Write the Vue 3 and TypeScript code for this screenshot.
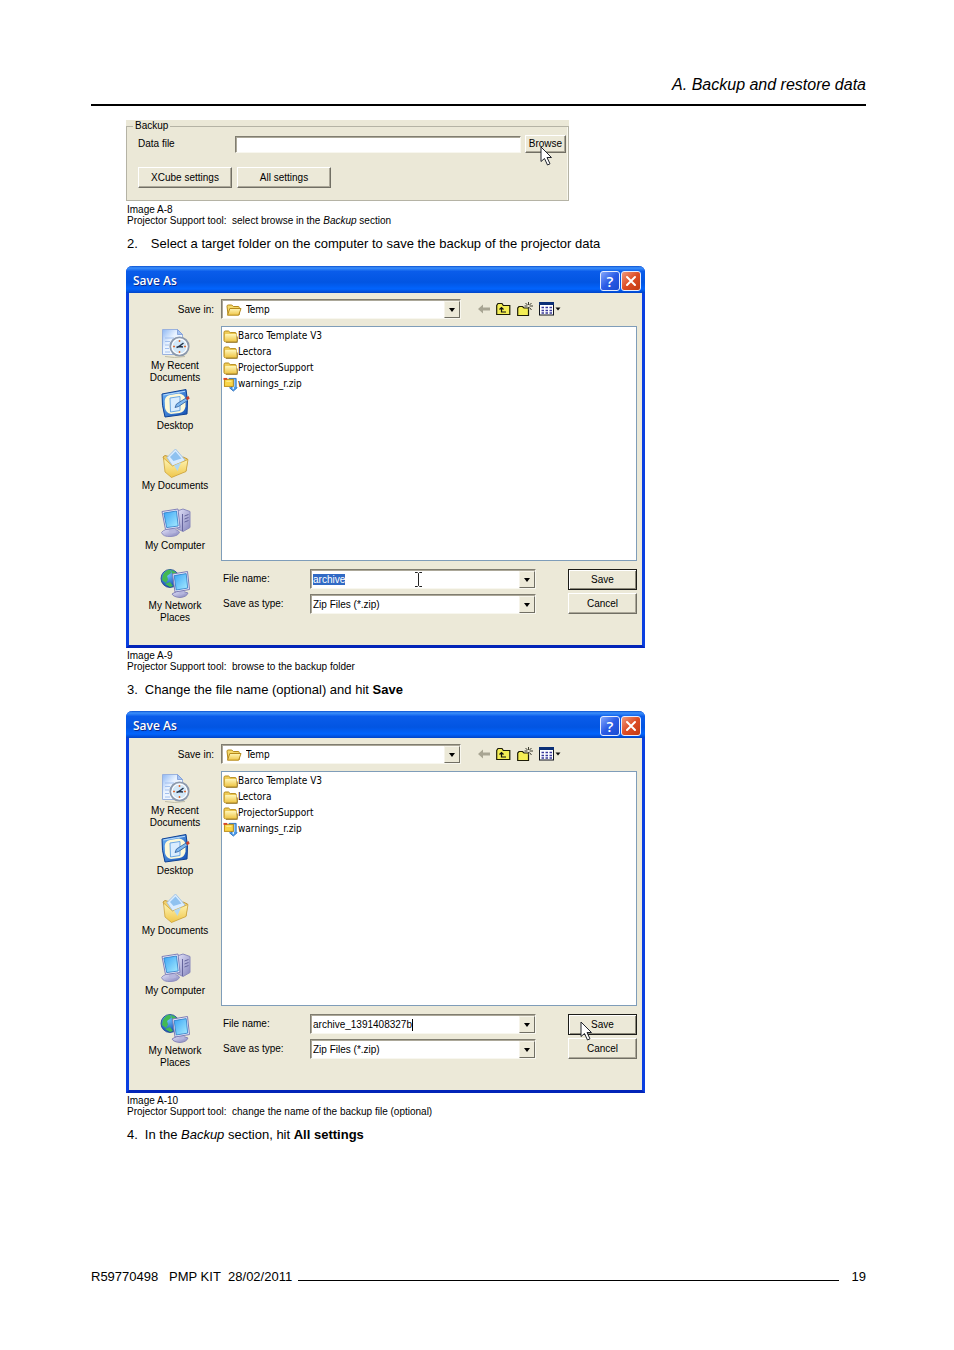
<script setup lang="ts">
import { onMounted, ref } from 'vue'

interface SaveDialog {
  id: string
  fileName: string
  selected: boolean
  image: string
  caption: string
}

const dialogs: SaveDialog[] = [
  {
    id: 'first',
    fileName: 'archive',
    selected: true,
    image: 'Image A-9',
    caption: 'Projector Support tool:  browse to the backup folder',
  },
  {
    id: 'second',
    fileName: 'archive_1391408327b',
    selected: false,
    image: 'Image A-10',
    caption: 'Projector Support tool:  change the name of the backup file (optional)',
  },
]

const places = [
  { icon: 'i-recent', label: 'My Recent Documents' },
  { icon: 'i-desktop', label: 'Desktop' },
  { icon: 'i-documents', label: 'My Documents' },
  { icon: 'i-computer', label: 'My Computer' },
  { icon: 'i-network', label: 'My Network Places' },
]

const files = [
  { icon: 'i-folder', name: 'Barco Template V3' },
  { icon: 'i-folder', name: 'Lectora' },
  { icon: 'i-folder', name: 'ProjectorSupport' },
  { icon: 'i-zip', name: 'warnings_r.zip' },
]

const root = ref<HTMLElement | null>(null)

onMounted(() => {
  const field = root.value?.querySelector<HTMLInputElement>('#name-first')
  field?.focus({ preventScroll: true })
  field?.select()
})
</script>

<template>
  <div ref="root" class="page">
    <svg class="defs" width="0" height="0" aria-hidden="true">
      <defs>
        <linearGradient id="g-fold" x1="0" y1="0" x2="0" y2="1">
          <stop offset="0" stop-color="#fff6b8" />
          <stop offset="1" stop-color="#efc64a" />
        </linearGradient>
        <linearGradient id="g-paper" x1="0" y1="0" x2="1" y2="1">
          <stop offset="0" stop-color="#8fb8f4" />
          <stop offset="0.4" stop-color="#e8f2ff" />
          <stop offset="1" stop-color="#ffffff" />
        </linearGradient>
        <linearGradient id="g-screen" x1="0" y1="0" x2="1" y2="1">
          <stop offset="0" stop-color="#3aa4f5" />
          <stop offset="1" stop-color="#a8ecff" />
        </linearGradient>
        <linearGradient id="g-case" x1="0" y1="0" x2="1" y2="1">
          <stop offset="0" stop-color="#e4e4fa" />
          <stop offset="1" stop-color="#8484bd" />
        </linearGradient>
        <linearGradient id="g-blue" x1="0" y1="0" x2="1" y2="1">
          <stop offset="0" stop-color="#6db4f6" />
          <stop offset="1" stop-color="#1450b4" />
        </linearGradient>
        <radialGradient id="g-globe" cx="0.4" cy="0.3" r="0.8">
          <stop offset="0" stop-color="#6cc0ff" />
          <stop offset="1" stop-color="#0a38a0" />
        </radialGradient>
      </defs>
      <symbol id="i-folder" viewBox="0 0 15 14">
        <path d="M1 3q0-1.500 1.300-1.500h3.200l1.700 1.600h5q1 0 1 1v1.200l.9 5.900q0 1-1 1.100H2.400Q1.200 12.300 1 11z" fill="#f0cd58" stroke="#b58a1c" />
        <path d="M2 5.300q.1-.7.8-.7h9.700q.7 0 .8.700l.5 5.400q0 1-.8 1H3q-.8 0-.8-.8z" fill="url(#g-fold)" />
        <path d="M3 12.900h11.300V7" fill="none" stroke="#8a6a1a" stroke-width=".8" />
      </symbol>
      <symbol id="i-open" viewBox="0 0 16 14">
        <path d="M1 3.200q0-1.200 1.200-1.200h3.600l1.500 1.500h5q1 0 1 1v7H2z" fill="#f5d96a" stroke="#b58a1c" />
        <path d="M3.800 5.500h11.200l-2.300 6.700H1.500z" fill="url(#g-fold)" stroke="#b58a1c" />
      </symbol>
      <symbol id="i-zip" viewBox="0 0 15 16">
        <path d="M6 1.500h7.500v8.500l1 1.500-4 3.500-4-3.500h2V9.500z" fill="#4a9bea" stroke="#2f72c0" />
        <path d="M12 2.500v8" stroke="#b5dcff" />
        <path d="M10.500 10v3" stroke="#d8efff" stroke-width="1.500" />
        <rect x="1" y="2.500" width="9.500" height="7.500" fill="#f9d548" stroke="#b98a14" />
        <path d="M0 2h4" stroke="#d8482a" stroke-width="2" />
        <path d="M3 4.500h5.500" stroke="#fff3a5" />
      </symbol>
      <symbol id="i-recent" viewBox="0 0 31 31">
        <path d="M2.500 1.500h15l5 5v20h-20z" fill="url(#g-paper)" stroke="#9ab2de" />
        <path d="M17.500 1.500l5 5h-5z" fill="#a5c4f4" stroke="#7b9bd6" stroke-width=".8" />
        <path d="M5 10h9M5 13.500h5M5 17h4M5 20.500h4M5 24h5" stroke="#a3c0ee" />
        <path d="M5 28.500q9 2 20 0" fill="none" stroke="#c0bda8" />
        <circle cx="19.500" cy="18.500" r="9.200" fill="#edf4fb" stroke="#8c99ac" stroke-width="1.800" />
        <circle cx="19.500" cy="18.500" r="7.400" fill="#d3e8f8" stroke="#fff" />
        <path d="M19.500 12v2M19.500 23v2M13 18.500h2M24 18.500h2" stroke="#df6b33" stroke-width="1.500" />
        <path d="M23.500 15L19 18.500l4 .5M19 18.500l-2.500 1" fill="none" stroke="#24344a" stroke-width="1.500" />
      </symbol>
      <symbol id="i-desktop" viewBox="0 0 31 31">
        <path d="M2 6L26 1.500Q28.500 12 27 26L5 29Q1.500 17 2 6z" fill="url(#g-blue)" stroke="#0f4294" />
        <path d="M3.500 7L25 3.300" stroke="#b8dcff" />
        <path d="M10 7l9-1.500q6 1 6.500 6v7q-1 5.500-6 6.500l-8.500 1q-5-1-6-6l-.3-7q.3-5 5.300-6z" fill="#fdf9d8" />
        <path d="M10 10l10-1.500v14L10.500 24z" fill="#d9edff" stroke="#6aa7e4" />
        <path d="M15 19.500l1.500-3.500 9.500-6 1.500 2.500-9 6z" fill="#7fb9f0" stroke="#2c5d9c" stroke-width=".8" />
        <path d="M26 9.500l2.500-1.500 1.200 2.500-2.500 1.700z" fill="#c8402c" />
      </symbol>
      <symbol id="i-documents" viewBox="0 0 31 31">
        <path d="M3 9l2-1.500 5 1.500 3 3 10-3 4.500 2-1.500 12-15 6z" fill="#f3d06c" stroke="#c29a3c" />
        <path d="M7 9.500L15.500 1l9.500 11-8.500 12z" fill="#d9ecff" stroke="#a2c4e6" />
        <path d="M15.500 3.500l6 7-8 2.500-3.500-4z" fill="#8fc2f0" />
        <path d="M3.500 10l9 8 15.500-6.500-2 12L11.500 29.500 5 24z" fill="url(#g-fold)" stroke="#cda43f" stroke-width=".8" />
        <path d="M14 17.500l7-3-3.500 8.500z" fill="#b0d8f4" />
      </symbol>
      <symbol id="i-computer" viewBox="0 0 31 31">
        <path d="M17 3l6-2 7 2.500v16l-7 4-6-3z" fill="url(#g-case)" stroke="#8a8abc" />
        <path d="M22.500 6v17M24.500 8l4-1.500M24.500 11l4-1.500M24.500 14l4-1.500" stroke="#65659d" fill="none" />
        <path d="M1.500 24.500q3-4 10-3.500 7 .5 8 3-1 4-8.500 4.500-8 .5-9.500-4z" fill="url(#g-case)" stroke="#9090c0" />
        <path d="M9 20h6l1 4.500-4 1-3-1.500z" fill="#b6b6dd" />
        <path d="M2 3.500L18 1l2 18.500L5.500 21.500z" fill="#ececfc" stroke="#8080b8" />
        <path d="M3.800 5l12.700-2 1.700 15-11.500 1.600z" fill="url(#g-screen)" stroke="#2a78c4" stroke-width=".8" />
      </symbol>
      <symbol id="i-network" viewBox="0 0 31 31">
        <circle cx="10" cy="10.500" r="9" fill="url(#g-globe)" stroke="#123e91" stroke-width=".8" />
        <path d="M3 7q2.500-5 7-5.500l1 3.500-4 3 1 3.500-2 3.500-4-3zM11 1.800l5 2.500-1 2.500-3-1zM5 16l5-2 3 4-3 1z" fill="#43b952" />
        <path d="M12 26q4-3.500 10-3l6 2q-1.500 4-8 4.500-6.500-.5-8-3.500z" fill="url(#g-case)" stroke="#8686b8" />
        <path d="M18 22l6-.5.5 4-4 1.500z" fill="#b6b6dd" />
        <path d="M12.500 6L27.500 3.500l2 18L15 24z" fill="#ececfc" stroke="#7c7cb4" />
        <path d="M14.200 7.600l12-2 1.500 14.500-11.500 1.900z" fill="url(#g-screen)" stroke="#2a78c4" stroke-width=".8" />
      </symbol>
      <symbol id="i-arrow" viewBox="0 0 12 20">
        <path d="M1 1v14.500l3.500-3 3 6.500 2.500-1.200-3-6.300h4.500z" fill="#fff" stroke="#20242e" stroke-linejoin="round" />
      </symbol>
    </svg>

    <header class="page-head">A. Backup and restore data</header>

    <main class="content">
      <figure class="figure panel-figure">
        <div class="panel">
          <fieldset class="backup">
            <legend>Backup</legend>
            <div class="data-row">
              <label for="data-file">Data file</label>
              <input id="data-file" class="data-input" type="text" />
              <div class="anchor">
                <button type="button" class="btn browse">Browse</button>
                <svg class="cursor on-browse" aria-hidden="true"><use href="#i-arrow" /></svg>
              </div>
            </div>
            <div class="settings-row">
              <button type="button" class="btn">XCube settings</button>
              <button type="button" class="btn">All settings</button>
            </div>
          </fieldset>
        </div>
        <figcaption>
          Image A-8<br />Projector Support tool:&nbsp; select browse in the <em>Backup</em> section
        </figcaption>
      </figure>

      <p class="step wide"><span>2.</span><span>Select a target folder on the computer to save the backup of the projector data</span></p>

      <template v-for="d in dialogs" :key="d.id">
        <figure class="figure">
          <section class="dialog">
            <div class="title-bar">
              <h2>Save As</h2>
              <button type="button" class="cap help" aria-label="Help">?</button>
              <button type="button" class="cap close" aria-label="Close">
                <svg viewBox="0 0 12 12" width="12" height="12"><path d="M2 2l8 8M10 2l-8 8" stroke="#fff" stroke-width="2" stroke-linecap="round" /></svg>
              </button>
            </div>
            <div class="dialog-body">
              <div class="look-row">
                <label class="look-label" :for="'in-' + d.id">Save in:</label>
                <div class="combo look-combo">
                  <svg class="open-icon" aria-hidden="true"><use href="#i-open" /></svg>
                  <select :id="'in-' + d.id" class="list-text"><option>Temp</option></select>
                  <span class="drop" aria-hidden="true"></span>
                </div>
                <div class="tools">
                  <button type="button" aria-label="Back">
                    <svg viewBox="0 0 12 10" width="12" height="10"><path d="M0 5l5-4.500V3.500h7v3H5v3z" fill="#a8a593" /></svg>
                  </button>
                  <button type="button" aria-label="Up one level">
                    <svg viewBox="0 0 15 14" width="15" height="14">
                      <path d="M.7 12.500V3.500L2 1.500h4l1.300 2h6.500v9z" fill="#f4ee55" stroke="#1c1c08" stroke-width="1.200" />
                      <path d="M5.500 6v4H10M3.500 7.500l2-2 2 2" fill="none" stroke="#111" stroke-width="1.200" />
                    </svg>
                  </button>
                  <button type="button" aria-label="New folder">
                    <svg viewBox="0 0 16 15" width="16" height="15">
                      <path d="M.7 13.500V6L2 4.500h3.500L7 6h4.500v7.500z" fill="#f4ee55" stroke="#1c1c08" stroke-width="1.200" />
                      <path d="M11.500 0v3M11.500 5v3M7.500 4h3M12.500 4H16M8.500 1l2 2M14.500 1l-2 2M14.500 8l-2-2.500" stroke="#3c3c30" />
                    </svg>
                  </button>
                  <button type="button" aria-label="View menu">
                    <svg viewBox="0 0 22 14" width="22" height="14">
                      <rect x=".5" y=".5" width="14" height="12.500" fill="#fff" stroke="#10151f" />
                      <path d="M0 1.500h15" stroke="#0b2f76" stroke-width="3" />
                      <path d="M2.500 5.500h2.500M6.500 5.500H9M10.500 5.500H13M2.500 8.500h2.500M6.500 8.500H9M10.500 8.500H13M2.500 11h2.500M6.500 11H9M10.500 11H13" stroke="#39399a" stroke-width="1.400" />
                      <path d="M16.500 5.500h5L19 8.500z" fill="#111" />
                    </svg>
                  </button>
                </div>
              </div>
              <div class="main-row">
                <nav class="places">
                  <button v-for="p in places" :key="p.icon" type="button">
                    <svg aria-hidden="true"><use :href="'#' + p.icon" /></svg>
                    <span>{{ p.label }}</span>
                  </button>
                </nav>
                <div class="work">
                  <ul class="files list-text">
                    <li v-for="f in files" :key="f.name">
                      <svg aria-hidden="true"><use :href="'#' + f.icon" /></svg>{{ f.name }}
                    </li>
                  </ul>
                  <div class="form-row">
                    <div class="fields">
                      <label :for="'name-' + d.id">File name:</label>
                      <div class="combo">
                        <input :id="'name-' + d.id" type="text" :value="d.fileName" />
                        <button type="button" class="drop" aria-label="Recent names"></button>
                        <svg v-if="d.selected" class="ibeam" viewBox="0 0 7 15" aria-hidden="true"><path d="M0 .5h2.500l1 1 1-1H7M3.500 1.500v12M0 14.500h2.500l1-1 1 1H7" fill="none" stroke="#222" /></svg>
                        <span v-else class="caret"></span>
                      </div>
                      <label :for="'type-' + d.id">Save as type:</label>
                      <div class="combo">
                        <select :id="'type-' + d.id"><option>Zip Files (*.zip)</option></select>
                        <span class="drop" aria-hidden="true"></span>
                      </div>
                    </div>
                    <div class="actions">
                      <button type="button" class="btn default">Save</button>
                      <button type="button" class="btn">Cancel</button>
                      <svg v-if="!d.selected" class="cursor on-save" aria-hidden="true"><use href="#i-arrow" /></svg>
                    </div>
                  </div>
                </div>
              </div>
            </div>
          </section>
          <figcaption>{{ d.image }}<br />{{ d.caption }}</figcaption>
        </figure>
        <p v-if="d.selected" class="step"><span>3.</span><span>Change the file name (optional) and hit <strong>Save</strong></span></p>
        <p v-else class="step"><span>4.</span><span>In the <em>Backup</em> section, hit <strong>All settings</strong></span></p>
      </template>
    </main>

    <footer class="page-foot">
      <span>R59770498&nbsp;&nbsp; PMP KIT&nbsp; 28/02/2011</span>
      <span class="rule"></span>
      <span>19</span>
    </footer>
  </div>
</template>

<style>
body {
  margin: 0;
  background: #fff;
}
</style>

<style scoped>
.page {
  box-sizing: border-box;
  min-height: 100vh;
  padding: 74px 88px 65px 91px;
  display: flex;
  flex-direction: column;
  background: #fff;
  color: #000;
  font-family: "Liberation Sans", Arial, sans-serif;
  font-size: 13px;
}
.defs {
  position: absolute;
}
.page-head {
  text-align: right;
  font-size: 16px;
  font-style: italic;
  line-height: 22px;
  padding-bottom: 8px;
  border-bottom: 2px solid #000;
}
.content {
  flex: 1;
  padding: 14px 0 0 35px;
}
.figure {
  margin: 0;
  max-width: 519px;
}
.panel-figure {
  max-width: 443px;
}
figcaption {
  padding: 2px 0 0 1px;
  font-size: 10px;
  line-height: 11px;
  white-space: pre-wrap;
}
.panel-figure figcaption {
  padding-top: 3px;
  white-space: normal;
}
.step {
  margin: 9px 0 13px 1px;
  display: flex;
  gap: 7px;
  font-size: 13px;
  line-height: 17px;
}
.step.wide {
  gap: 13px;
  margin-bottom: 14px;
}

button,
input,
select {
  font: inherit;
  color: inherit;
  margin: 0;
  padding: 0;
  border: 0;
  border-radius: 0;
  background: none;
  outline: none;
}
select {
  appearance: none;
}
.btn {
  box-sizing: border-box;
  height: 21px;
  background: #ece9d8;
  border: 1px solid;
  border-color: #fff #716f64 #716f64 #fff;
  box-shadow: inset -1px -1px 0 #aca899;
  text-align: center;
  white-space: nowrap;
}
.btn.default {
  border-color: #1c1c18;
  box-shadow: inset 1px 1px 0 #fff, inset -1px -1px 0 #8c897a;
}
.cursor {
  position: absolute;
  width: 12px;
  height: 20px;
  pointer-events: none;
}

.panel {
  height: 81px;
  background: #ebe8d7;
  font-size: 10px;
  line-height: 12px;
}
.backup {
  box-sizing: border-box;
  height: 81px;
  min-width: 0;
  margin: 0;
  padding: 3px 2px 0 11px;
  border: 1px solid #b5b3a5;
  box-shadow: inset -1px 0 0 #f8f7ee;
}
.backup legend {
  margin-left: -5px;
  padding: 0 2px;
  background: #ebe8d7;
}
.data-row {
  display: flex;
  align-items: center;
}
.data-row label {
  flex: 0 0 97px;
}
.data-input {
  box-sizing: border-box;
  flex: 1;
  min-width: 0;
  height: 17px;
  background: #fff;
  border: 1px solid;
  border-color: #807d70 #f8f7ef #f8f7ef #807d70;
  box-shadow: inset 1px 1px 0 #aca899;
}
.anchor {
  position: relative;
  margin-left: 4px;
}
.anchor .btn {
  display: block;
  width: 41px;
  height: 18px;
}
.on-browse {
  left: 15px;
  top: 11px;
}
.settings-row {
  display: flex;
  gap: 5px;
  padding-top: 14px;
}
.settings-row .btn {
  width: 94px;
}

.dialog {
  background: #ece9d8;
  border: solid #0a3fe0;
  border-width: 0 3px 3px;
  border-bottom-color: #0224b8;
  border-radius: 6px 6px 0 0;
  font-size: 10px;
  line-height: 12px;
}
.title-bar {
  display: flex;
  align-items: center;
  gap: 2px;
  height: 27px;
  margin: 0 -3px;
  padding: 0 4px 0 7px;
  box-sizing: border-box;
  border-radius: 6px 6px 0 0;
  background: linear-gradient(#0a50d0 0, #3c90fb 7%, #0a5cea 20%, #0255e2 60%, #0264fd 85%, #0144c8 100%);
  color: #fff;
}
.title-bar h2 {
  flex: 1;
  margin: 0;
  padding-top: 3px;
  font: 600 12px/16px "Open Sans", "Noto Sans", sans-serif;
  text-shadow: 1px 1px 0 #0a2a8c;
}
.cap {
  box-sizing: border-box;
  width: 20px;
  height: 20px;
  margin-top: 2px;
  display: grid;
  place-items: center;
  border: 1px solid #e6edff;
  border-radius: 3px;
}
.title-bar .cap + .cap {
  margin-left: -1px;
}
.cap.help {
  background: linear-gradient(135deg, #84a7fb, #2a5be6 50%, #1b4bd0);
  font: 600 15px/16px "Open Sans", sans-serif;
}
.cap.close {
  background: linear-gradient(135deg, #f0997c, #dd4c25 50%, #c23a12);
}
.dialog-body {
  padding: 6px 5px 17px 0;
}
.look-row {
  display: flex;
  align-items: center;
}
.look-label {
  flex: 0 0 85px;
  margin-right: 7px;
  padding-top: 1px;
  text-align: right;
}
.combo {
  position: relative;
  box-sizing: border-box;
  display: flex;
  align-items: center;
  height: 20px;
  padding: 1px 0 0 1px;
  background: #fff;
  border: 1px solid;
  border-color: #807d70 #f8f7ef #f8f7ef #807d70;
  box-shadow: inset 1px 1px 0 #aca899;
}
.combo input,
.combo select {
  flex: 1;
  min-width: 0;
  height: 14px;
  padding-left: 1px;
}
.combo input::selection {
  background: #316ac5;
  color: #fff;
}
.drop {
  box-sizing: border-box;
  flex: 0 0 16px;
  height: 17px;
  display: grid;
  place-items: center;
  background: #ece9d8;
  border: 1px solid;
  border-color: #f6f4ea #716f64 #716f64 #f6f4ea;
}
.drop::before {
  content: "";
  border: solid transparent;
  border-width: 4px 3px 0;
  border-top-color: #000;
}
.look-combo {
  flex: 0 1 240px;
}
.open-icon {
  width: 16px;
  height: 14px;
  margin: 0 3px 0 3px;
}
.tools {
  display: flex;
  align-items: center;
  gap: 6px;
  margin-left: 17px;
}
.tools button,
.tools svg {
  display: block;
}
.main-row {
  display: flex;
  padding-top: 7px;
}
.places {
  flex: 0 0 92px;
  padding-top: 2px;
}
.places button {
  display: flex;
  flex-direction: column;
  align-items: center;
  gap: 1px;
  width: 64px;
  height: 60px;
  margin: 0 auto;
}
.places button:not(:first-child):not(:last-child) {
  width: 92px;
}
.places svg {
  flex: none;
  width: 31px;
  height: 31px;
}
.work {
  flex: 1;
  min-width: 0;
}
.list-text {
  font-family: "DejaVu Sans Condensed", "DejaVu Sans", sans-serif;
}
.files {
  box-sizing: border-box;
  height: 235px;
  margin: 0;
  padding: 1px;
  list-style: none;
  background: #fff;
  border: 1px solid #7f9db9;
}
.files li {
  display: flex;
  align-items: center;
  height: 16px;
}
.files svg {
  width: 15px;
  height: 15px;
}
.form-row {
  display: flex;
  gap: 32px;
  padding-top: 8px;
}
.fields {
  flex: 1;
  display: grid;
  grid-template-columns: 87px 1fr;
  grid-auto-rows: 20px;
  row-gap: 5px;
  align-items: center;
  padding-left: 2px;
}
.actions {
  position: relative;
  display: flex;
  flex-direction: column;
  gap: 3px;
  width: 69px;
}
.on-save {
  left: 12px;
  top: 7px;
}
.ibeam {
  position: absolute;
  left: 104px;
  top: 2px;
  width: 7px;
  height: 15px;
}
.caret {
  position: absolute;
  left: 101px;
  top: 4px;
  width: 1px;
  height: 12px;
  background: #000;
}

.page-foot {
  display: flex;
  align-items: center;
  font-size: 13px;
  line-height: 16px;
}
.rule {
  flex: 1;
  margin: 6px 13px 0 6px;
  border-top: 1px solid #000;
}
</style>
